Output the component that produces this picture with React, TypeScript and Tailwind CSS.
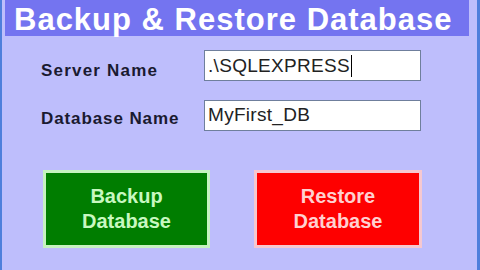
export default function App() {
  const font = { fontFamily: '"Liberation Sans", Arial, sans-serif' };
  return (
    <div
      className="w-[480px] h-[270px] bg-[#bebefc] border-l-[2px] border-r-[3px] border-[#4f7fdc] flex flex-col overflow-hidden"
      style={font}
    >
      <div className="ml-[3px] mr-[8px] h-[36px] shrink-0 bg-[#7474f0] flex items-center pl-[9px]">
        <span className="text-white text-[31px] font-bold leading-none tracking-[1px] mt-[2px] whitespace-nowrap">
          Backup &amp; Restore Database
        </span>
      </div>
      <div className="mt-[12px] pl-[39px] flex flex-col gap-[16px]">
        <div className="flex items-center">
          <span className="w-[163px] text-[17px] font-bold text-[#1a1a30] tracking-[1.2px] mt-[10px]">Server Name</span>
          <div className="w-[217px] h-[31px] bg-white border border-[#6f7f9c] flex items-center pl-[3px]">
            <span className="text-[19px] text-[#222] tracking-[0.3px]">.\SQLEXPRESS</span>
            <span className="w-px h-[22px] bg-black ml-[1px]" />
          </div>
        </div>
        <div className="flex items-center">
          <span className="w-[163px] text-[17px] font-bold text-[#1a1a30] tracking-[0.9px] mt-[6px]">Database Name</span>
          <div className="w-[217px] h-[31px] bg-white border border-[#6f7f9c] flex items-center pl-[3px]">
            <span className="text-[19px] text-[#222] tracking-[0.3px]">MyFirst_DB</span>
          </div>
        </div>
      </div>
      <div className="mt-[39px] pl-[41px] flex gap-[44px]">
        <div className="w-[167px] h-[78px] bg-[#007d00] border-[3px] border-[#c6f3c0] flex flex-col items-center justify-center text-[#c8f8c0] text-[20px] font-bold leading-[25px]">
          <span>Backup</span>
          <span>Database</span>
        </div>
        <div className="w-[168px] h-[78px] bg-[#fe0000] border-[3px] border-[#f6c8d0] flex flex-col items-center justify-center text-[#ffd0d0] text-[20px] font-bold leading-[25px]">
          <span>Restore</span>
          <span>Database</span>
        </div>
      </div>
    </div>
  );
}
